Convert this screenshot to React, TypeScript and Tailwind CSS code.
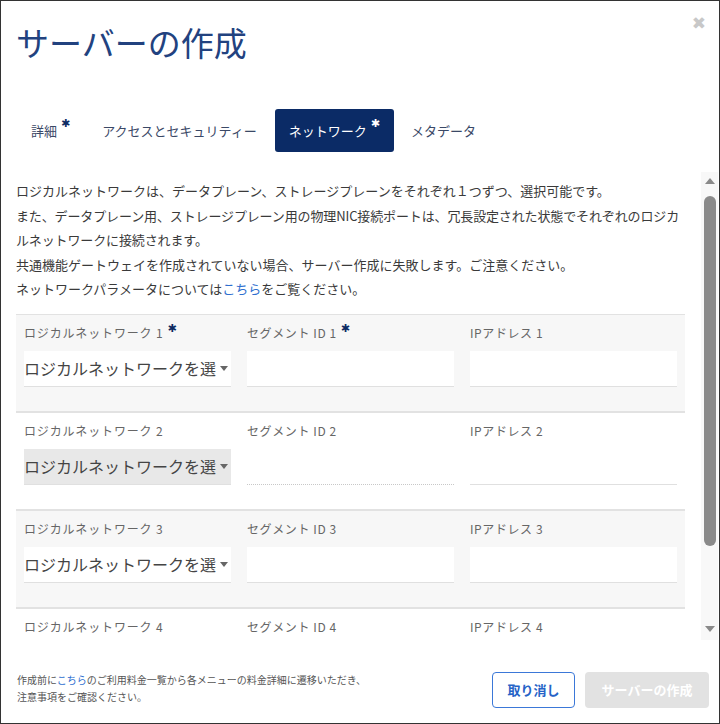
import React from 'react'

const FONT = "font-['Noto_Sans_CJK_JP','Noto_Sans',sans-serif]"

function Star({ white }: { white?: boolean }) {
  return (
    <span
      className={`relative -top-[6px] ml-[4px] text-[11px] font-['DejaVu_Sans',sans-serif] ${
        white ? 'text-white' : 'text-[#0d2b63]'
      }`}
    >
      ✱
    </span>
  )
}

function Caret() {
  return (
    <svg width="8" height="5" viewBox="0 0 8 5" className="shrink-0 ml-[4px] mr-[3px]">
      <path d="M0 0h8L4 5z" fill="#666" />
    </svg>
  )
}

type RowProps = {
  n: number
  required?: boolean
  disabled?: boolean
  shaded?: boolean
  first?: boolean
}

function NetworkRow({ n, required, disabled, shaded, first }: RowProps) {
  return (
    <div
      className={`grid grid-cols-3 gap-x-4 px-2 pt-[10px] pb-[24px] border-b-2 border-[#e2e2e2] ${
        first ? 'border-t' : ''
      } ${shaded ? 'bg-[#f7f7f7]' : 'bg-white'}`}
    >
      <div>
        <div className="h-[16px] mb-[10px] text-[12px] leading-[16px] tracking-[0.07em] text-[#666] whitespace-nowrap">
          ロジカルネットワーク {n}
          {required && <Star />}
        </div>
        <div
          className={`h-[36px] flex items-center border-b border-[#e0e0e0] ${
            disabled ? 'bg-[#e8e8e8]' : 'bg-white'
          }`}
        >
          <span className="flex-1 overflow-hidden whitespace-nowrap text-[16px] text-[#444]">
            ロジカルネットワークを選択してください
          </span>
          <Caret />
        </div>
      </div>
      <div>
        <div className="h-[16px] mb-[10px] text-[12px] leading-[16px] tracking-[0.05em] text-[#666] whitespace-nowrap">
          セグメント ID {n}
          {required && <Star />}
        </div>
        <div
          className={`h-[36px] border-b ${
            disabled ? 'border-dotted border-[#c8c8c8]' : 'bg-white border-[#e0e0e0]'
          }`}
        />
      </div>
      <div>
        <div className="h-[16px] mb-[10px] text-[12px] leading-[16px] tracking-[0.05em] text-[#666] whitespace-nowrap">
          IPアドレス {n}
        </div>
        <div className={`h-[36px] border-b border-[#e0e0e0] ${disabled ? '' : 'bg-white'}`} />
      </div>
    </div>
  )
}

export default function App() {
  return (
    <div className={`w-[720px] h-[724px] bg-white border border-[#333] relative flex flex-col ${FONT}`}>
      {/* close */}
      <button className="absolute right-[13px] top-[14px] text-[#c8c8c8] text-[17px] font-bold leading-none font-['DejaVu_Sans',sans-serif]">
        ✖
      </button>

      {/* header */}
      <div className="pl-[15px] pt-[22px] h-[171px] shrink-0">
        <h1 className="text-[33px] leading-[38px] text-[#22427f] font-normal">サーバーの作成</h1>
        <div className="flex gap-1 mt-[48px] ml-[1px]">
          <div className="h-[43px] px-[14px] flex items-center text-[13px] text-[#3a4866]">
            詳細
            <Star />
          </div>
          <div className="h-[43px] px-[14px] flex items-center text-[13px] text-[#3a4866]">
            アクセスとセキュリティー
          </div>
          <div className="h-[43px] px-[14px] flex items-center text-[13px] text-white bg-[#0b2b66] rounded-[3px]">
            ネットワーク
            <Star white />
          </div>
          <div className="h-[43px] px-[13px] flex items-center text-[13px] text-[#3a4866]">
            メタデータ
          </div>
        </div>
      </div>

      {/* scroll area */}
      <div className="flex h-[468px] shrink-0">
        <div className="w-[669px] ml-[15px] overflow-hidden">
          <div className="pt-[7px] pb-[12px] text-[13px] leading-[24.5px] text-[#3a3a3a]">
            <p>ロジカルネットワークは、データプレーン、ストレージプレーンをそれぞれ１つずつ、選択可能です。</p>
            <p className="whitespace-nowrap tracking-[-0.01em]">
              また、データプレーン用、ストレージプレーン用の物理NIC接続ポートは、冗長設定された状態でそれぞれのロジカ
              <br />
              ルネットワークに接続されます。
            </p>
            <p>共通機能ゲートウェイを作成されていない場合、サーバー作成に失敗します。ご注意ください。</p>
            <p>
              ネットワークパラメータについては<span className="text-[#2f6fcf]">こちら</span>をご覧ください。
            </p>
          </div>
          <NetworkRow n={1} required shaded first />
          <NetworkRow n={2} disabled />
          <NetworkRow n={3} shaded />
          <NetworkRow n={4} />
        </div>
        {/* scrollbar */}
        <div className="ml-[16px] w-[17px] bg-[#f8f8f8] flex flex-col items-center">
          <svg width="10" height="6" viewBox="0 0 10 6" className="mt-[6px]">
            <path d="M0 6L5 0l5 6z" fill="#8a8a8a" />
          </svg>
          <div className="mt-[12px] w-[12px] h-[350px] rounded-full bg-[#8a8a8a]" />
          <div className="flex-1" />
          <svg width="10" height="6" viewBox="0 0 10 6" className="mb-[8px]">
            <path d="M0 0h10L5 6z" fill="#8a8a8a" />
          </svg>
        </div>
      </div>

      {/* footer */}
      <div className="flex-1 flex items-center justify-between pl-[16px] pr-[10px] pt-[12px]">
        <div className="text-[10px] leading-[17px] text-[#555]">
          <p>
            作成前に<span className="text-[#2f6fcf]">こちら</span>のご利用料金一覧から各メニューの料金詳細に遷移いただき、
          </p>
          <p>注意事項をご確認ください。</p>
        </div>
        <div className="flex gap-[10px] mt-[4px]">
          <button className="w-[83px] h-[36px] border border-[#3b78d8] rounded-[4px] text-[13px] font-bold text-[#2563c7] bg-white">
            取り消し
          </button>
          <button className="w-[124px] h-[36px] rounded-[4px] bg-[#e2e2e2] text-[13px] font-bold text-white">
            サーバーの作成
          </button>
        </div>
      </div>
    </div>
  )
}
